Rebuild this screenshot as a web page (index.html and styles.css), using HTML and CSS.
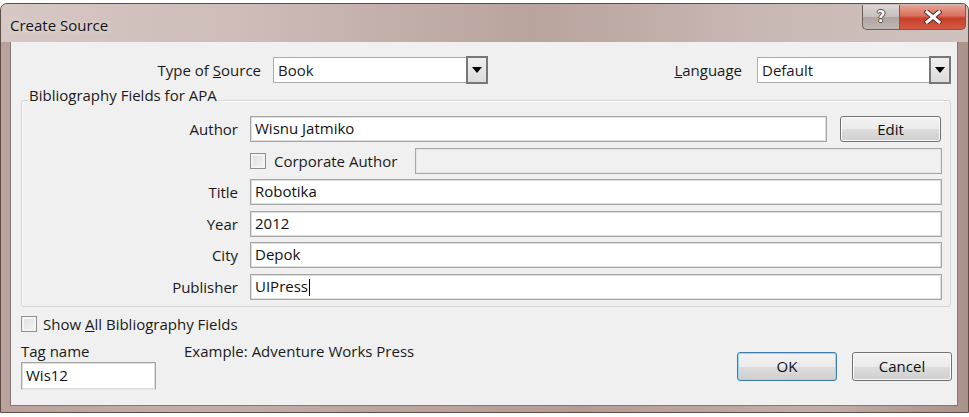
FILE: index.html
```html
<!DOCTYPE html>
<html lang="en">
<head>
    <meta charset="UTF-8">
    <meta name="viewport" content="width=device-width, initial-scale=1.0">
    <title>Create Source</title>
    <link rel="stylesheet" href="styles.css">
</head>
<body>
    <div class="window">
        <div class="titlebar">
            <span class="title">Create Source</span>
            <div class="caption">
                <span class="cap-btn help">?</span>
                <span class="cap-btn close">
                    <svg width="18" height="14" viewBox="0 0 18 14">
                        <path d="M3 2 L15 12 M15 2 L3 12" stroke="#5a2a22" stroke-width="5" stroke-linecap="square"/>
                        <path d="M3 2 L15 12 M15 2 L3 12" stroke="#ffffff" stroke-width="3" stroke-linecap="square"/>
                    </svg>
                </span>
            </div>
        </div>
        <div class="client">
            <div class="top-row">
                <label class="type-label">Type of <u>S</u>ource</label>
                <div class="combo type-combo">
                    <span class="combo-text">Book</span>
                    <span class="combo-arrow"></span>
                </div>
                <label class="lang-label"><u>L</u>anguage</label>
                <div class="combo lang-combo">
                    <span class="combo-text">Default</span>
                    <span class="combo-arrow"></span>
                </div>
            </div>

            <div class="group">
                <span class="group-title">Bibliography Fields for APA</span>
                <div class="rows">
                    <div class="field-row">
                        <label class="field-label">Author</label>
                        <div class="textbox">Wisnu Jatmiko</div>
                        <button class="btn edit-btn">Edit</button>
                    </div>
                    <div class="field-row">
                        <span class="field-label"></span>
                        <span class="check"></span>
                        <span class="check-text">Corporate Author</span>
                        <div class="textbox disabled"></div>
                    </div>
                    <div class="field-row">
                        <label class="field-label">Title</label>
                        <div class="textbox">Robotika</div>
                    </div>
                    <div class="field-row">
                        <label class="field-label">Year</label>
                        <div class="textbox">2012</div>
                    </div>
                    <div class="field-row">
                        <label class="field-label">City</label>
                        <div class="textbox">Depok</div>
                    </div>
                    <div class="field-row">
                        <label class="field-label">Publisher</label>
                        <div class="textbox">UIPress<span class="caret"></span></div>
                    </div>
                </div>
            </div>

            <div class="show-all">
                <span class="check"></span>
                <span>Show <u>A</u>ll Bibliography Fields</span>
            </div>

            <div class="bottom">
                <div class="tag">
                    <div class="tag-label">Tag name</div>
                    <div class="textbox tag-box">Wis12</div>
                </div>
                <div class="example">Example: Adventure Works Press</div>
                <div class="actions">
                    <button class="btn ok-btn">OK</button>
                    <button class="btn">Cancel</button>
                </div>
            </div>
        </div>
    </div>
</body>
</html>
```

FILE: styles.css
```css
body{
    margin: 0px;
    padding: 0px;
    background-color: #ffffff;
    font-family: "Open Sans", "Liberation Sans", sans-serif;
    font-size: 15px;
    color: #1a1a1a;
}
.window{
    box-sizing: border-box;
    margin-top: 3px;
    height: 410px;
    border: 1px solid #5e4c47;
    border-radius: 7px 7px 0 0;
    background: linear-gradient(to right, #b9a29c, #c3aea9 20%, #b49c96 60%, #c2aea9 85%, #ab928b);
    display: flex;
    flex-direction: column;
}
.titlebar{
    height: 38px;
    flex-shrink: 0;
    display: flex;
    align-items: flex-start;
    padding-left: 9px;
    padding-right: 2px;
    border-radius: 6px 6px 0 0;
    background: linear-gradient(to right, #d6c8c5, #cdbcb8 25%, #b9a39d 55%, #c9b9b5 80%, #cfc1be);
}
.title{
    margin-top: 11px;
    line-height: 20px;
    color: #141414;
    text-shadow: 0 0 6px rgba(255, 255, 255, 0.7);
}
.caption{
    margin-left: auto;
    margin-top: 1px;
    display: flex;
}
.cap-btn{
    box-sizing: border-box;
    height: 25px;
    display: flex;
    align-items: center;
    justify-content: center;
    border: 1px solid #6d5e5a;
    border-top: none;
}
.help{
    width: 37px;
    border-radius: 0 0 0 5px;
    border-right: none;
    background: linear-gradient(#dcd6d4, #c7bfbd 50%, #aea4a1 51%, #bfb6b3);
    color: #f4f4f4;
    font-family: "DejaVu Sans", sans-serif;
    font-weight: bold;
    font-size: 15px;
    text-shadow: 1px 0 0 #505050, -1px 0 0 #505050, 0 1px 0 #505050, 0 -1px 0 #505050;
}
.close{
    width: 67px;
    border-radius: 0 0 5px 0;
    background: linear-gradient(#e9a393, #d8705d 45%, #c6402a 55%, #d45a43);
}
.client{
    flex: 1;
    margin: 0px 10px 6px 9px;
    background-color: #f0f0f0;
    border: 1px solid #8a7671;
    border-top: none;
    padding: 15px 6px 0px 10px;
    display: flex;
    flex-direction: column;
}
.top-row{
    display: flex;
    align-items: center;
    height: 26px;
}
.type-label{
    width: 240px;
    text-align: right;
    margin-right: 12px;
}
.lang-label{
    flex: 1;
    text-align: right;
    margin-right: 15px;
}
.combo{
    box-sizing: border-box;
    height: 26px;
    display: flex;
    align-items: center;
    background-color: #ffffff;
    border: 1px solid #acacac;
}
.type-combo{
    width: 215px;
}
.lang-combo{
    width: 194px;
}
.combo-text{
    flex: 1;
    padding-left: 4px;
}
.combo-arrow{
    box-sizing: border-box;
    width: 22px;
    height: 28px;
    margin-right: -1px;
    border: 2px solid #777777;
    background: linear-gradient(#efefef, #dcdcdc);
    position: relative;
}
.combo-arrow::after{
    content: "";
    position: absolute;
    left: 4px;
    top: 9px;
    border-left: 5px solid transparent;
    border-right: 5px solid transparent;
    border-top: 6px solid #000000;
}
.group{
    margin-top: 17px;
    border: 1px solid #d6d6d6;
    border-radius: 3px;
    box-shadow: inset 1px 1px 0 #ffffff;
    padding: 0px 8px 6px 0px;
    display: flex;
    flex-direction: column;
    align-items: flex-start;
}
.group-title{
    margin-top: -16px;
    margin-left: 6px;
    padding: 0px 1px;
    line-height: 20px;
    background-color: #f0f0f0;
}
.rows{
    align-self: stretch;
    margin-top: 11px;
    display: flex;
    flex-direction: column;
    gap: 5.6px;
}
.field-row{
    display: flex;
    align-items: center;
    height: 26px;
}
.field-label{
    width: 216px;
    margin-right: 12px;
    text-align: right;
    flex-shrink: 0;
}
.textbox{
    box-sizing: border-box;
    flex: 1;
    height: 26px;
    line-height: 22px;
    padding-left: 4px;
    background-color: #ffffff;
    border: 1px solid #a6a6a6;
    box-shadow: inset 0 0 0 1px #dedede;
    color: #111111;
    white-space: nowrap;
}
.textbox.disabled{
    background-color: #f0f0f0;
    box-shadow: inset 0 0 0 1px #e6e6e6;
}
.caret{
    display: inline-block;
    width: 1px;
    height: 17px;
    margin-left: 1px;
    vertical-align: -4px;
    background-color: #000000;
}
.check{
    box-sizing: border-box;
    width: 16px;
    height: 16px;
    flex-shrink: 0;
    border: 1px solid #8e8f8f;
    background: linear-gradient(135deg, #dcdcdc, #f6f6f6);
    box-shadow: inset 0 0 0 2px #f4f4f4;
}
.check-text{
    width: 141px;
    margin-left: 8px;
    flex-shrink: 0;
}
.btn{
    box-sizing: border-box;
    font-family: inherit;
    font-size: 15px;
    color: #111111;
    height: 26px;
    border: 1px solid #707070;
    border-radius: 3px;
    background: linear-gradient(#f2f2f2, #ebebeb 50%, #dddddd 51%, #cfcfcf);
    box-shadow: inset 0 0 0 1px #fbfbfb;
    padding: 0px;
}
.edit-btn{
    width: 101px;
    margin-left: 13px;
    margin-right: 1px;
}
.show-all{
    margin-top: 9px;
    display: flex;
    align-items: center;
    gap: 6px;
    height: 17px;
}
.bottom{
    margin-top: 8px;
    display: flex;
    align-items: flex-start;
}
.tag{
    width: 163px;
    flex-shrink: 0;
}
.tag-label{
    line-height: 20px;
}
.tag-box{
    width: 135px;
    height: 28px;
    margin-top: 1px;
    line-height: 24px;
    border-bottom-color: #e4e4e4;
}
.example{
    line-height: 20px;
}
.actions{
    margin-left: auto;
    margin-right: -1px;
    margin-top: 11px;
    display: flex;
    gap: 15px;
}
.actions .btn{
    width: 100px;
    height: 29px;
}
.ok-btn{
    border-color: #3d7bad;
    box-shadow: inset 0 0 0 1px #9fd5f2;
}
```
